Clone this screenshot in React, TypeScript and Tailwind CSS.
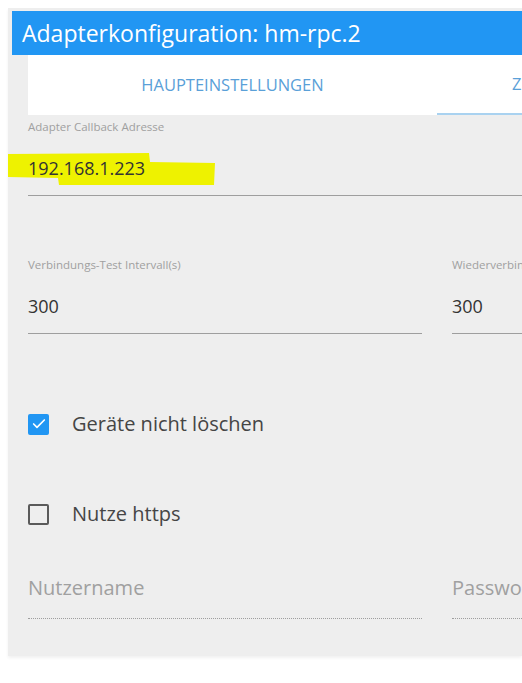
import { Check } from "lucide-react";

function Field({ label, value, full }: { label: string; value: string; full?: boolean }) {
  return (
    <div className={full ? "w-[520px]" : "w-[394px] shrink-0"}>
      <div className="text-[11.5px] leading-[16px] text-[#a0a0a0] whitespace-nowrap">{label}</div>
      <div className="mt-[21px] text-[18px] leading-[24px] text-[#333]">{value}</div>
      <div className="mt-[15px] h-px bg-[#9e9e9e]" />
    </div>
  );
}

function CheckRow({ label, checked }: { label: string; checked?: boolean }) {
  return (
    <div className="flex items-center h-[24px]">
      {checked ? (
        <span className="w-[21px] h-[21px] rounded-[2px] bg-[#2196f3] flex items-center justify-center">
          <Check size={16} strokeWidth={2.5} className="text-white" />
        </span>
      ) : (
        <span className="w-[21px] h-[21px] rounded-[2px] border-2 border-[#5a5a5a]" />
      )}
      <span className="ml-[23px] text-[20px] text-[#454545]">{label}</span>
    </div>
  );
}

export default function App() {
  return (
    <div className="w-[522px] h-[683px] bg-white overflow-hidden font-['Open_Sans',sans-serif]">
      <div className="ml-[8px] mt-[8px] h-[648px] bg-[#eeeeee] pt-[3px] pl-[4px] overflow-hidden shadow-[0_2px_3px_rgba(0,0,0,0.06)]">
        {/* Header */}
        <div className="h-[44px] bg-[#2196f3] flex items-center pl-[10px] text-white text-[23px] whitespace-nowrap">
          Adapterkonfiguration: hm-rpc.2
        </div>

        <div className="pl-[16px]">
          {/* Tabs */}
          <div className="h-[60px] bg-white flex w-[900px]">
            <div className="w-[409px] flex items-center justify-center text-[16.5px] text-[#5aa0d8]">
              HAUPTEINSTELLUNGEN
            </div>
            <div className="w-[409px] flex flex-col">
              <div className="flex-1 flex items-center pl-[75px] text-[16.5px] text-[#5aa0d8] whitespace-nowrap">
                ZUSÄTZLICHE EINSTELLUNGEN
              </div>
              <div className="h-[2px] bg-[#a9d2f0]" />
            </div>
          </div>

          {/* Form */}
          <div className="pt-[4px]">
            <div className="relative">
              <svg className="absolute left-[-25px] top-[34px]" width="220" height="36" viewBox="0 0 220 36">
                <path d="M0 1 L146 0 L147 9 L212 10 L211 32 L56 32 L55 25 L1 24 Z" fill="#eef200" />
              </svg>
              <div className="relative">
                <Field label="Adapter Callback Adresse" value="192.168.1.223" full />
              </div>
            </div>

            <div className="mt-[61px] flex gap-[30px]">
              <Field label="Verbindungs-Test Intervall(s)" value="300" />
              <Field label="Wiederverbindungs-Intervall(s)" value="300" />
            </div>

            <div className="mt-[78px]">
              <CheckRow label="Geräte nicht löschen" checked />
            </div>
            <div className="mt-[66px]">
              <CheckRow label="Nutze https" />
            </div>

            <div className="mt-[48px] flex gap-[30px]">
              <div className="w-[394px] shrink-0">
                <div className="text-[20px] leading-[28px] text-[#a0a0a0]">Nutzername</div>
                <div className="mt-[16px] border-b border-dotted border-[#9e9e9e]" />
              </div>
              <div className="w-[394px] shrink-0">
                <div className="text-[20px] leading-[28px] text-[#a0a0a0]">Passwort</div>
                <div className="mt-[16px] border-b border-dotted border-[#9e9e9e]" />
              </div>
            </div>
          </div>
        </div>
      </div>
    </div>
  );
}
